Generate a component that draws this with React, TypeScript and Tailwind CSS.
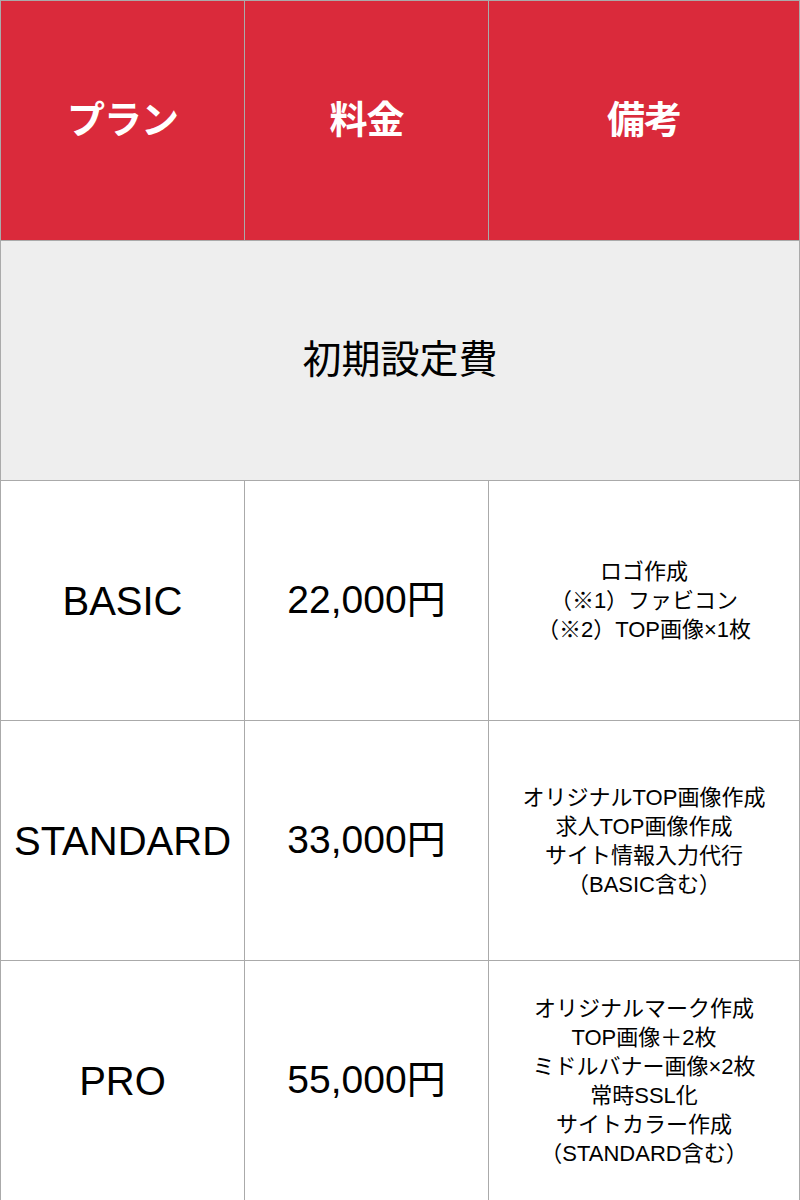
const font = {
  fontFamily: '"Liberation Sans", Arial, "Noto Sans CJK JP", sans-serif',
};

const plans = [
  { name: "BASIC", price: "22,000円", notes: ["ロゴ作成", "（※1）ファビコン", "（※2）TOP画像×1枚"] },
  {
    name: "STANDARD",
    price: "33,000円",
    notes: ["オリジナルTOP画像作成", "求人TOP画像作成", "サイト情報入力代行", "（BASIC含む）"],
  },
  {
    name: "PRO",
    price: "55,000円",
    notes: [
      "オリジナルマーク作成",
      "TOP画像＋2枚",
      "ミドルバナー画像×2枚",
      "常時SSL化",
      "サイトカラー作成",
      "（STANDARD含む）",
    ],
  },
];

export default function App() {
  return (
    <div className="w-[800px] bg-white text-black" style={font}>
      <div className="grid grid-cols-[244px_244px_311px] border-l border-t border-[#aaaaaa]">
        {["プラン", "料金", "備考"].map((h) => (
          <div
            key={h}
            className="h-[240px] flex items-center justify-center bg-[#da2a3b] text-white font-bold text-[38px] tracking-[-1px] border-r border-b border-[#aaaaaa]"
          >
            {h}
          </div>
        ))}
        <div className="col-span-3 h-[240px] flex items-center justify-center bg-[#eeeeee] text-[39px] border-r border-b border-[#aaaaaa]">
          初期設定費
        </div>
        {plans.map((p) => (
          <div key={p.name} className="contents">
            <div className="h-[240px] flex items-center justify-center text-[40px] border-r border-b border-[#aaaaaa]">
              {p.name}
            </div>
            <div className="h-[240px] flex items-center justify-center text-[39px] border-r border-b border-[#aaaaaa]">
              {p.price}
            </div>
            <div className="h-[240px] flex flex-col items-center justify-center text-[22px] leading-[29px] text-center border-r border-b border-[#aaaaaa]">
              {p.notes.map((n) => (
                <div key={n}>{n}</div>
              ))}
            </div>
          </div>
        ))}
      </div>
    </div>
  );
}
